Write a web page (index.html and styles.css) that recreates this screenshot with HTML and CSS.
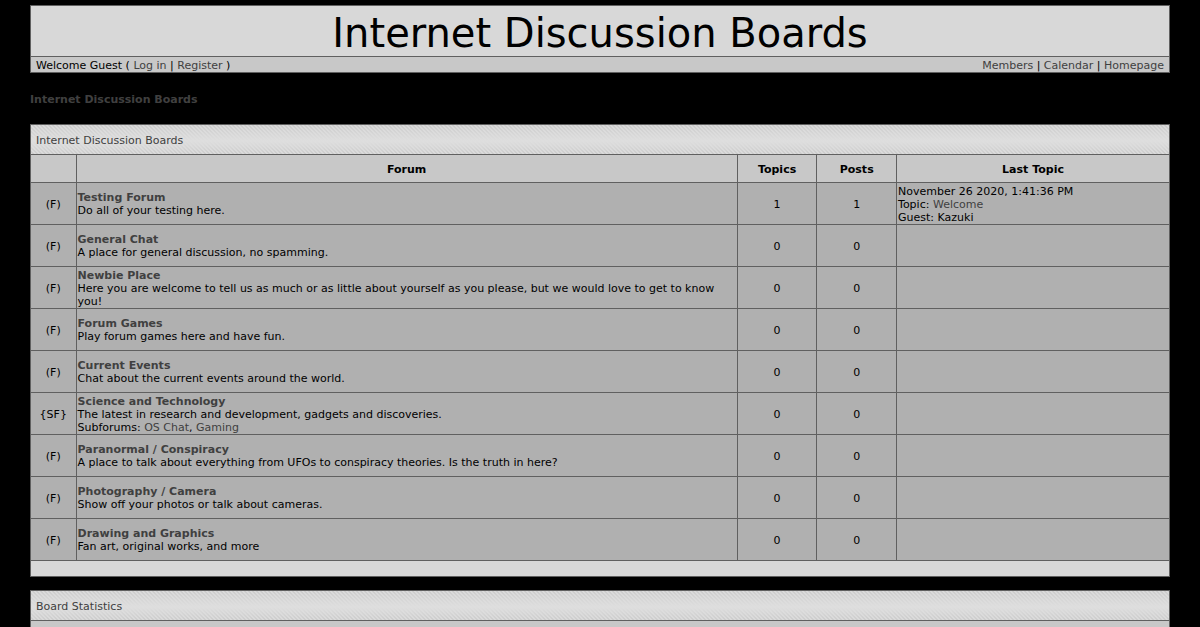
FILE: index.html
```html
<!DOCTYPE html>
<html lang="en">
<head>
<meta charset="utf-8">
<meta name="viewport" content="width=device-width, initial-scale=1">
<title>Internet Discussion Boards</title>
<link rel="stylesheet" href="styles.css">
</head>
<body>
<div class="page">
  <header class="panel">
    <h1 class="site-title">Internet Discussion Boards</h1>
    <div class="user-bar">
      <div>Welcome Guest ( <a href="#login">Log in</a> | <a href="#register">Register</a> )</div>
      <nav><a href="#members">Members</a> | <a href="#calendar">Calendar</a> | <a href="#home">Homepage</a></nav>
    </div>
  </header>

  <nav class="breadcrumb"><a href="#top">Internet Discussion Boards</a></nav>

  <main>
    <section class="panel board">
      <h2 class="panel-title"><a href="#board">Internet Discussion Boards</a></h2>
      <table class="forums">
        <colgroup>
          <col class="col-icon"><col class="col-forum"><col class="col-count"><col class="col-count"><col class="col-last">
        </colgroup>
        <thead>
          <tr><th></th><th scope="col">Forum</th><th scope="col">Topics</th><th scope="col">Posts</th><th scope="col">Last Topic</th></tr>
        </thead>
        <tbody>
          <tr>
            <td class="center">(F)</td>
            <td><a class="forum-name" href="#f1">Testing Forum</a><br>Do all of your testing here.</td>
            <td class="center">1</td><td class="center">1</td>
            <td class="full">November 26 2020, 1:41:36 PM<br>Topic: <a href="#welcome">Welcome</a><br>Guest: Kazuki</td>
          </tr>
          <tr>
            <td class="center">(F)</td>
            <td><a class="forum-name" href="#f2">General Chat</a><br>A place for general discussion, no spamming.</td>
            <td class="center">0</td><td class="center">0</td><td></td>
          </tr>
          <tr>
            <td class="center">(F)</td>
            <td class="full"><a class="forum-name" href="#f3">Newbie Place</a><br>Here you are welcome to tell us as much or as little about yourself as you please, but we would love to get to know you!</td>
            <td class="center">0</td><td class="center">0</td><td></td>
          </tr>
          <tr>
            <td class="center">(F)</td>
            <td><a class="forum-name" href="#f4">Forum Games</a><br>Play forum games here and have fun.</td>
            <td class="center">0</td><td class="center">0</td><td></td>
          </tr>
          <tr>
            <td class="center">(F)</td>
            <td><a class="forum-name" href="#f5">Current Events</a><br>Chat about the current events around the world.</td>
            <td class="center">0</td><td class="center">0</td><td></td>
          </tr>
          <tr>
            <td class="center">{SF}</td>
            <td class="full"><a class="forum-name" href="#f6">Science and Technology</a><br>The latest in research and development, gadgets and discoveries.<br>Subforums: <a href="#os">OS Chat</a>, <a href="#gaming">Gaming</a></td>
            <td class="center">0</td><td class="center">0</td><td></td>
          </tr>
          <tr>
            <td class="center">(F)</td>
            <td><a class="forum-name" href="#f7">Paranormal / Conspiracy</a><br>A place to talk about everything from UFOs to conspiracy theories. Is the truth in here?</td>
            <td class="center">0</td><td class="center">0</td><td></td>
          </tr>
          <tr>
            <td class="center">(F)</td>
            <td><a class="forum-name" href="#f8">Photography / Camera</a><br>Show off your photos or talk about cameras.</td>
            <td class="center">0</td><td class="center">0</td><td></td>
          </tr>
          <tr>
            <td class="center">(F)</td>
            <td><a class="forum-name" href="#f9">Drawing and Graphics</a><br>Fan art, original works, and more</td>
            <td class="center">0</td><td class="center">0</td><td></td>
          </tr>
        </tbody>
      </table>
      <div class="panel-foot"></div>
    </section>

    <section class="panel">
      <h2 class="panel-title"><a href="#stats">Board Statistics</a></h2>
      <div class="stats-head"></div>
    </section>
  </main>
</div>
</body>
</html>
```
FILE: styles.css
```css
* {
  box-sizing: border-box;
}

body {
  margin: 0;
  background: #000;
  color: #000;
  font: 11px/13px Verdana, "DejaVu Sans", sans-serif;
}

a {
  color: #404040;
  text-decoration: none;
}

.page {
  width: 95%;
  margin: 0 auto;
  padding: 5px 0;
}

.panel {
  border: 1px solid #606060;
  background: #d8d8d8;
}

.site-title {
  margin: 0;
  padding: 4px 2px 0;
  border-bottom: 1px solid #606060;
  font-size: 40px;
  font-weight: normal;
  line-height: 46px;
  text-align: center;
}

.user-bar {
  display: flex;
  justify-content: space-between;
  padding: 2px 5px 0;
  background: #c8c8c8;
}

.breadcrumb {
  padding: 20px 0 18px;
  font-weight: bold;
}

.board {
  margin-bottom: 13px;
}

.panel-title {
  margin: 0;
  padding: 9px 5px 7px;
  border-bottom: 1px solid #606060;
  background:
    linear-gradient(rgba(222, 222, 222, 0), #dedede 55%, rgba(222, 222, 222, 0)),
    linear-gradient(45deg, #cccccc 25%, #dadada 25% 50%, #cccccc 50% 75%, #dadada 75%) 0 0 / 4px 4px;
  font-size: 11px;
  font-weight: normal;
}

.forums {
  width: 100%;
  table-layout: fixed;
  border-collapse: separate;
  border-spacing: 0;
}

.col-icon {
  width: 4%;
}

.col-count {
  width: 7%;
}

.col-last {
  width: 23.9%;
}

.forums th,
.forums td {
  border-right: 1px solid #606060;
  border-bottom: 1px solid #606060;
}

.forums th:last-child,
.forums td:last-child {
  border-right: 0;
}

.forums th {
  height: 28px;
  padding: 2px 1px 0;
  background: #c8c8c8;
}

.forums td {
  height: 42px;
  padding: 1px;
  background: #b0b0b0;
}

.forums .center,
.forums .full {
  padding: 2px 1px 0;
}

.forums .center {
  text-align: center;
}

.forum-name {
  font-weight: bold;
}

.panel-foot {
  height: 15px;
}

.stats-head {
  height: 28px;
  background: #c8c8c8;
}
```
